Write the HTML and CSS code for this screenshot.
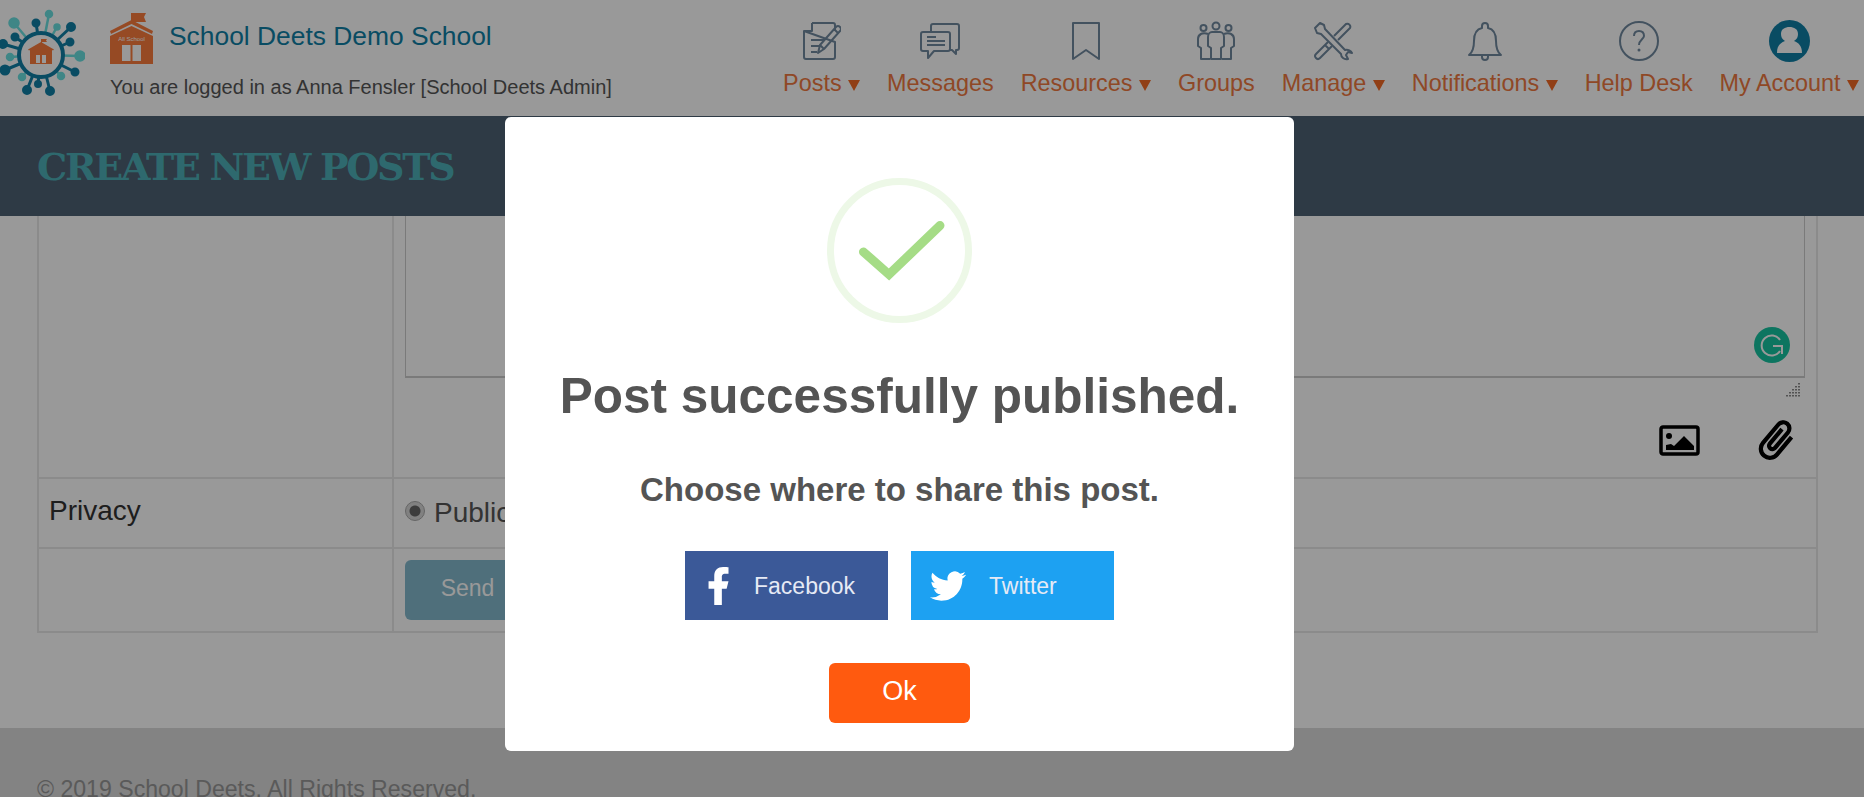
FILE: index.html
```html
<!DOCTYPE html>
<html>
<head>
	<title>School Deets - Create New Posts</title>
	<link rel="stylesheet" href="styles.css">
</head>
<body>
	<header class="topbar">
		<div class="brand">
			<svg class="logo" viewBox="0 0 85 96" width="85" height="96">
				<g stroke="#69dfe0" stroke-width="2.5" fill="#69dfe0">
					<line x1="41" y1="55" x2="14" y2="23"/><circle cx="14" cy="23" r="4.5"/>
					<line x1="41" y1="55" x2="49" y2="14"/><circle cx="49" cy="14" r="3"/>
					<line x1="41" y1="55" x2="57" y2="27"/><circle cx="57" cy="27" r="2.5"/>
					<line x1="41" y1="55" x2="80" y2="56"/><circle cx="80" cy="56" r="4.5"/>
					<line x1="41" y1="55" x2="61" y2="76"/><circle cx="61" cy="76" r="3"/>
					<line x1="41" y1="55" x2="22" y2="77"/><circle cx="22" cy="77" r="3"/>
					<line x1="41" y1="55" x2="10" y2="57"/><circle cx="10" cy="57" r="3"/>
				</g>
				<g stroke="#107fa6" stroke-width="3" fill="#107fa6">
					<line x1="41" y1="55" x2="3" y2="44"/><circle cx="3" cy="44" r="3.5"/>
					<line x1="41" y1="55" x2="5" y2="70"/><circle cx="5" cy="70" r="4"/>
					<line x1="41" y1="55" x2="27" y2="90"/><circle cx="27" cy="90" r="3.5"/>
					<line x1="41" y1="55" x2="50" y2="91"/><circle cx="50" cy="91" r="3.5"/>
					<line x1="41" y1="55" x2="75" y2="72"/><circle cx="75" cy="72" r="3"/>
					<line x1="41" y1="55" x2="71" y2="27"/><circle cx="71" cy="27" r="3.5"/>
					<line x1="41" y1="55" x2="36" y2="23"/><circle cx="36" cy="23" r="3"/>
					<line x1="41" y1="55" x2="15" y2="37"/><circle cx="15" cy="37" r="3"/>
					<line x1="41" y1="55" x2="70" y2="42"/><circle cx="70" cy="42" r="3"/>
					<line x1="41" y1="55" x2="38" y2="84"/><circle cx="38" cy="84" r="2.5"/>
				</g>
				<circle cx="41" cy="55" r="22" fill="#ffffff" stroke="#107fa6" stroke-width="4"/>
				<path d="M30 64V50l-1 .6-1-1.200L41 42l13 7.400-1 1.200-1-.6v14z" fill="#fb7c3c"/>
				<path d="M41 43v-4h6l-1 1.500 1 1.500h-5v1z" fill="#fb7c3c"/>
				<path d="M36 55h4v8h-4zM42 55h4v8h-4z" fill="#fff"/>
			</svg>
			<div class="brand-text">
				<div class="brand-row">
					<svg class="school-icon" viewBox="0 0 43 52" width="43" height="52">
						<path d="M21 12V1h15l-2 4 2 5H23v2z" fill="#fb7c3c"/>
						<path d="M0 19 21.500 8 43 19l-1 3L21.500 12 1 22z" fill="#fb7c3c"/>
						<path d="M0 52V24L21.500 14 43 24v28z" fill="#fb7c3c"/>
						<path d="M12 33h8.500v16H12zM22.500 33H31v16h-8.500z" fill="#fff"/>
						<text class="school-icon-text" x="21.500" y="29" text-anchor="middle">All School</text>
					</svg>
					<span class="school-name">School Deets Demo School</span>
				</div>
				<p class="logged-in">You are logged in as Anna Fensler [School Deets Admin]</p>
			</div>
		</div>
		<nav class="nav">
			<a class="nav-item">
				<svg class="nav-icon" viewBox="0 0 38 40" width="38" height="40">
					<path d="M9 2h21a2 2 0 0 1 2 2v6M32 21v15a2 2 0 0 1-2 2H3a2 2 0 0 1-2-2V10zM9 2v8H1M8 19h13M8 25h9M8 31h6"/>
					<path d="M15 32l2-8L33 6a2.500 2.500 0 0 1 4 4L21 28zM17 24l4 4M31 8l4 4"/>
				</svg>
				<span>Posts <i class="caret"></i></span>
			</a>
			<a class="nav-item">
				<svg class="nav-icon" viewBox="0 0 40 38" width="40" height="38">
					<path d="M11 9V4a2 2 0 0 1 2-2h24a2 2 0 0 1 2 2v22a2 2 0 0 1-2 2h-1v4l-4-4h-2"/>
					<path d="M3 10h25a2 2 0 0 1 2 2v15a2 2 0 0 1-2 2H14l-6 7v-7H3a2 2 0 0 1-2-2V12a2 2 0 0 1 2-2zM7 15h9M7 19h18M7 23h18"/>
				</svg>
				<span>Messages</span>
			</a>
			<a class="nav-item">
				<svg class="nav-icon" viewBox="0 0 30 40" width="30" height="40">
					<path d="M2 2h26v36l-13-9-13 9z"/>
				</svg>
				<span>Resources <i class="caret"></i></span>
			</a>
			<a class="nav-item">
				<svg class="nav-icon" viewBox="0 0 38 40" width="38" height="40">
					<circle cx="6.500" cy="7" r="3"/><circle cx="19" cy="5" r="3.500"/><circle cx="31.500" cy="7" r="3"/>
					<path d="M11 13c-2-1-6-1-7 0-2 1-3 3-3 5v7l3 2v11h9"/>
					<path d="M27 13c2-1 6-1 7 0 2 1 3 3 3 5v7l-3 2v11h-9"/>
					<path d="M14 38V27l-3-2V16c0-3 2-5 4-5h8c2 0 4 2 4 5v9l-3 2v11z"/>
				</svg>
				<span>Groups</span>
			</a>
			<a class="nav-item">
				<svg class="nav-icon" viewBox="0 0 40 40" width="40" height="40">
					<path d="M2 7l5-5 4 2 1 4 20 21c3-1 6 1 7 3l-4-1-2 3 2 4c-4 1-7-2-7-5L8 13l-4-1z"/>
					<path d="M21 15 33 3a3 3 0 0 1 4 4L25 19M15 21 3 33c-2 2-1 3 0 4s2 2 4 0l12-12M12 24l4 4"/>
				</svg>
				<span>Manage <i class="caret"></i></span>
			</a>
			<a class="nav-item">
				<svg class="nav-icon" viewBox="0 0 34 40" width="34" height="40">
					<path d="M1 34c4-3 5-7 5-14 0-7 3-12 8-13V5a3 3 0 0 1 6 0v2c5 1 8 6 8 13 0 7 1 11 5 14zM14 34v2a3 3 0 0 0 6 0v-2"/>
				</svg>
				<span>Notifications <i class="caret"></i></span>
			</a>
			<a class="nav-item">
				<svg class="nav-icon" viewBox="0 0 40 40" width="40" height="40">
					<circle cx="20" cy="20" r="19"/>
					<path d="M15 15c0-3 2-5 5-5s5 2 5 5-5 4-5 9"/>
					<circle class="nav-icon-dot" cx="20" cy="29" r="1.500"/>
				</svg>
				<span>Help Desk</span>
			</a>
			<a class="nav-item">
				<svg class="account-icon" viewBox="0 0 41 42" width="41" height="42">
					<ellipse cx="20.500" cy="21" rx="20.500" ry="21" fill="#107fa6"/>
					<path d="M8 33c0-7 3-10 8-12-3-2-4-4-4-7 0-5 4-7 8.500-7s8.500 2 8.500 7c0 3-1 5-4 7 5 2 8 5 8 12z" fill="#fff"/>
				</svg>
				<span>My Account <i class="caret"></i></span>
			</a>
		</nav>
	</header>

	<div class="title-bar">
		<h1>CREATE NEW POSTS</h1>
	</div>

	<main class="content">
		<table class="post-table">
			<tr class="row-message">
				<td class="label-cell"></td>
				<td class="field-cell">
					<div class="textarea-wrap">
						<textarea class="message"></textarea>
						<svg class="grammarly" viewBox="0 0 36 36" width="36" height="36">
							<circle cx="18" cy="18" r="18" fill="#17c3a0"/>
							<path d="M26 13a10 10 0 1 0 0 11" fill="none" stroke="#fff" stroke-width="2"/>
							<path d="M19 19h9v8" fill="none" stroke="#fff" stroke-width="2"/>
						</svg>
					</div>
					<div class="resizer-row">
						<svg viewBox="0 0 15 15" width="15" height="15">
							<path class="resizer-dots" d="M13 1v14M10 4v11M7 7v8M4 10v5M1 13v2"/>
						</svg>
					</div>
					<div class="attach-row">
						<svg class="attach-image" viewBox="0 0 41 31" width="41" height="31">
							<rect x="2" y="2" width="37" height="27" rx="2" fill="none" stroke="#000" stroke-width="3.500"/>
							<circle cx="10" cy="11" r="3" fill="#000"/>
							<path d="M7 25v-5l5-1 3 2 10-10 10 10v4z" fill="#000"/>
						</svg>
						<svg class="attach-clip" viewBox="0 0 24 24" width="46" height="46">
							<path transform="rotate(40 12 12)" stroke="#000" stroke-width="0.7" d="M16.500 6v11.500c0 2.210-1.790 4-4 4s-4-1.790-4-4V5c0-1.380 1.120-2.500 2.500-2.500s2.500 1.120 2.500 2.500v10.500c0 .55-.45 1-1 1s-1-.45-1-1V6H10v9.500c0 1.380 1.120 2.500 2.500 2.500s2.500-1.120 2.500-2.500V5c0-2.210-1.790-4-4-4S7 2.790 7 5v12.500c0 3.040 2.460 5.500 5.500 5.500s5.500-2.460 5.500-5.500V6h-1.500z"/>
						</svg>
					</div>
				</td>
			</tr>
			<tr class="row-privacy">
				<td class="label-cell">Privacy</td>
				<td class="field-cell">
					<label class="privacy-option"><i class="radio"></i>Public</label>
				</td>
			</tr>
			<tr class="row-send">
				<td class="label-cell"></td>
				<td class="field-cell"><button class="send-btn">Send</button></td>
			</tr>
		</table>
	</main>

	<footer class="footer">© 2019 School Deets. All Rights Reserved.</footer>

	<div class="overlay">
		<div class="modal">
			<div class="success-ring">
				<svg viewBox="0 0 145 145" width="145" height="145">
					<circle cx="72.500" cy="72.500" r="69" fill="none" stroke="#edf8e7" stroke-width="7"/>
					<path d="M36.500 74 62 96.500 113 47.500" fill="none" stroke="#a5dc86" stroke-width="9" stroke-linecap="round" stroke-linejoin="miter"/>
				</svg>
			</div>
			<h2 class="modal-title">Post successfully published.</h2>
			<p class="modal-text">Choose where to share this post.</p>
			<div class="share-row">
				<a class="share-btn facebook">
					<svg class="share-icon" viewBox="7 2 11 20" width="22" height="38">
						<path fill="#fff" d="M14 13.500h2.500l1-4H14v-2c0-1.030 0-2 2-2h1.500V2.140c-.326-.043-1.557-.14-2.857-.14C11.928 2 10 3.657 10 6.700v2.800H7v4h3V22h4v-8.500z"/>
					</svg>
					<span class="share-label">Facebook</span>
				</a>
				<a class="share-btn twitter">
					<svg class="share-icon" viewBox="0 0 24 24" width="36" height="36">
						<path fill="#fff" d="M23.953 4.570a10 10 0 01-2.825.775 4.958 4.958 0 002.163-2.723c-.951.555-2.005.959-3.127 1.184a4.920 4.920 0 00-8.384 4.482C7.690 8.095 4.067 6.130 1.640 3.162a4.822 4.822 0 00-.666 2.475c0 1.710.870 3.213 2.188 4.096a4.904 4.904 0 01-2.228-.616v.060a4.923 4.923 0 003.946 4.827 4.996 4.996 0 01-2.212.085 4.936 4.936 0 004.604 3.417 9.867 9.867 0 01-6.102 2.105c-.390 0-.779-.023-1.170-.067a13.995 13.995 0 007.557 2.209c9.053 0 13.998-7.496 13.998-13.985 0-.210 0-.420-.015-.630A9.935 9.935 0 0024 4.590z"/>
					</svg>
					<span class="share-label">Twitter</span>
				</a>
			</div>
			<button class="ok-btn">Ok</button>
		</div>
	</div>
</body>
</html>
```

FILE: styles.css
```css
html, body {
	height: 100%;
}
body {
	margin: 0;
	overflow: hidden;
	font-family: "Liberation Sans", Arial, sans-serif;
	background-color: #fff;
	color: #333;
}

/* header */
.topbar {
	display: flex;
	justify-content: space-between;
	height: 116px;
	background-color: #fff;
}
.brand {
	display: flex;
}
.brand-text {
	margin-left: 25px;
	padding-top: 12px;
}
.brand-row {
	display: flex;
	height: 52px;
}
.school-icon-text {
	font-size: 6px;
	fill: #fff;
}
.school-name {
	margin-left: 16px;
	margin-top: 8px;
	font-size: 26.400px;
	line-height: 32px;
	color: #107fa6;
}
.logged-in {
	margin: 11px 0 0;
	font-size: 20px;
	line-height: 24px;
	color: #555;
}
.nav {
	display: flex;
	gap: 27px;
	padding-top: 20px;
	padding-right: 5px;
}
.nav-item {
	display: flex;
	flex-direction: column;
	align-items: center;
	font-size: 23.400px;
	line-height: 28px;
	color: #ef7840;
}
.nav-item svg {
	height: 42px;
	margin-bottom: 7px;
}
.nav-icon {
	fill: none;
	stroke: #71899f;
	stroke-width: 2;
	stroke-linejoin: round;
}
.nav-icon-dot {
	fill: #71899f;
	stroke: none;
}
.caret {
	display: inline-block;
	width: 0;
	height: 0;
	border-left: 6px solid transparent;
	border-right: 6px solid transparent;
	border-top: 11px solid #f26a25;
	vertical-align: 0;
}

/* page title */
.title-bar {
	display: flex;
	align-items: center;
	height: 100px;
	padding-left: 37px;
	background-color: #4e6173;
}
.title-bar h1 {
	margin: 0;
	font-family: "DejaVu Serif", "Liberation Serif", serif;
	font-size: 38px;
	font-weight: bold;
	letter-spacing: -2.300px;
	color: #4db0b7;
}

/* form */
.content {
	height: 512px;
	padding-left: 37px;
	padding-right: 46px;
}
.post-table {
	width: 1781px;
	border-collapse: collapse;
	font-size: 28px;
	color: #333;
}
.post-table td {
	border: 2px solid #e8e8e8;
	padding: 0;
}
.row-message td {
	border-top: none;
}
.row-message {
	height: 262px;
}
.row-privacy {
	height: 70px;
}
.row-send {
	height: 84px;
}
.label-cell {
	width: 343px;
	padding-left: 10px !important;
	padding-bottom: 4px !important;
}
.field-cell {
	padding: 0 11px !important;
	vertical-align: top;
}
.textarea-wrap {
	position: relative;
	height: 162px;
}
.message {
	display: block;
	width: 100%;
	height: 100%;
	box-sizing: border-box;
	border: 1px solid #ccc;
	border-top: none;
	border-bottom-width: 2px;
	background: #fff;
	resize: none;
	outline: none;
}
.grammarly {
	position: absolute;
	right: 15px;
	bottom: 15px;
}
.resizer-row {
	display: flex;
	justify-content: flex-end;
	height: 15px;
	padding-top: 4px;
	padding-right: 4px;
}
.resizer-dots {
	fill: none;
	stroke: #666;
	stroke-width: 1.500;
	stroke-dasharray: 1.500 1.500;
}
.attach-row {
	display: flex;
	justify-content: flex-end;
	align-items: center;
	gap: 53px;
	margin-top: 20px;
	padding-right: 6px;
}
.privacy-option {
	display: flex;
	align-items: center;
	gap: 9px;
	padding-top: 18px;
	color: #555;
}
.radio {
	box-sizing: border-box;
	width: 20px;
	height: 20px;
	margin-top: -4px;
	border: 1px solid #aaa;
	border-radius: 50%;
	background: radial-gradient(circle, #666 0, #666 5px, #d8d8d8 6px);
}
.send-btn {
	display: block;
	width: 125px;
	height: 60px;
	margin-top: 11px;
	padding: 0 0 4px;
	border: none;
	border-radius: 6px;
	background-color: #84b9cd;
	color: #fff;
	font-family: inherit;
	font-size: 23px;
}

/* footer */
.footer {
	height: 69px;
	padding: 47px 0 0 37px;
	background-color: #dadada;
	font-size: 23.100px;
	line-height: 28px;
	color: #969696;
}

/* modal */
.overlay {
	position: fixed;
	top: 0;
	left: 0;
	right: 0;
	bottom: 0;
	display: flex;
	justify-content: center;
	align-items: flex-start;
	padding: 117px 65px 0 0;
	background-color: rgba(0, 0, 0, 0.4);
}
.modal {
	display: flex;
	flex-direction: column;
	align-items: center;
	width: 789px;
	padding: 61px 0 28px;
	border-radius: 6px;
	background-color: #fff;
}
.success-ring {
	height: 145px;
}
.modal-title {
	margin: 43px 0 0;
	font-size: 49.500px;
	line-height: 60px;
	color: #545454;
}
.modal-text {
	margin: 44px 0 0;
	font-size: 33px;
	font-weight: bold;
	line-height: 40px;
	color: #545454;
}
.share-row {
	display: flex;
	gap: 23px;
	margin-top: 41px;
}
.share-btn {
	display: flex;
	align-items: center;
	width: 203px;
	height: 69px;
	font-size: 23px;
	color: #e6eaf5;
}
.share-label {
	margin-top: 2px;
}
.facebook {
	gap: 24px;
	padding-left: 23px;
	box-sizing: border-box;
	background-color: #3b5998;
}
.twitter {
	gap: 23px;
	padding-left: 19px;
	box-sizing: border-box;
	background-color: #1da1f2;
}
.ok-btn {
	width: 141px;
	height: 60px;
	margin-top: 43px;
	padding: 0 0 4px;
	border: none;
	border-radius: 6px;
	background-color: #ff5a0f;
	color: #fff;
	font-family: inherit;
	font-size: 27px;
}
```
